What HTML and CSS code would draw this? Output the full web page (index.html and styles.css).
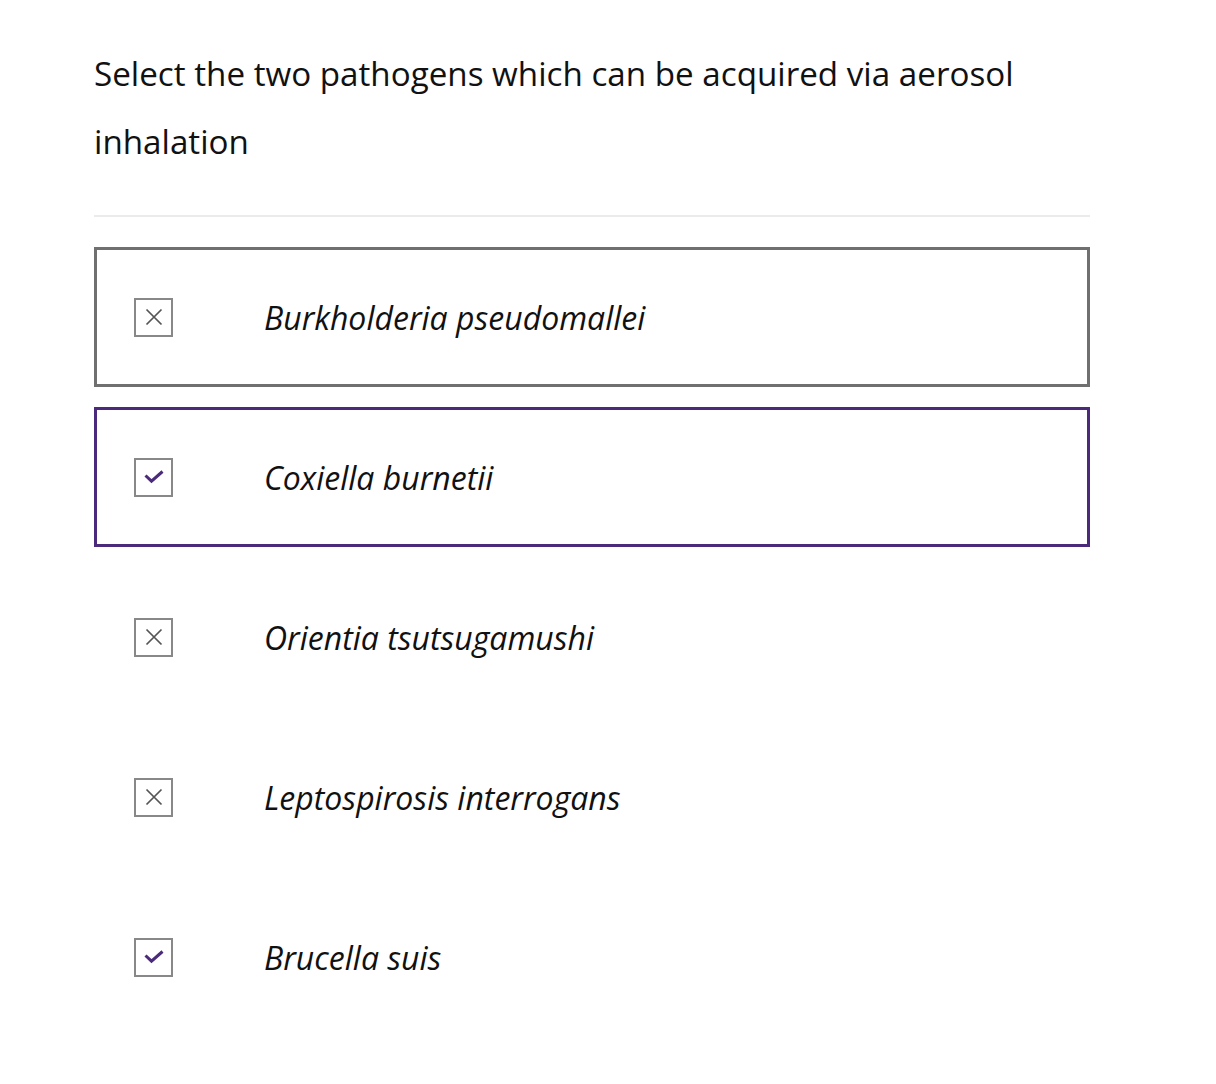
FILE: index.html
```html
<!DOCTYPE html>
<html>
<head>
<meta charset="utf-8">
<link rel="stylesheet" href="styles.css">
</head>
<body>
<div class="quiz">
  <h1 class="question">Select the two pathogens which can be acquired via aerosol inhalation</h1>
  <hr class="divider">
  <ul class="options">
    <li class="option option--wrong">
      <span class="box"><svg viewBox="0 0 18 18" width="18" height="18"><path d="M1.5 1.5 L16.5 16.5 M16.5 1.5 L1.5 16.5" stroke="#555" stroke-width="1.7" fill="none"/></svg></span>
      <span class="label">Burkholderia pseudomallei</span>
    </li>
    <li class="option option--right">
      <span class="box"><svg viewBox="0 0 20 14" width="20" height="14"><path d="M1.5 5.5 L7.5 11.2 L18.5 1.5" stroke="#4b2a7b" stroke-width="3" fill="none"/></svg></span>
      <span class="label">Coxiella burnetii</span>
    </li>
    <li class="option">
      <span class="box"><svg viewBox="0 0 18 18" width="18" height="18"><path d="M1.5 1.5 L16.5 16.5 M16.5 1.5 L1.5 16.5" stroke="#555" stroke-width="1.7" fill="none"/></svg></span>
      <span class="label">Orientia tsutsugamushi</span>
    </li>
    <li class="option">
      <span class="box"><svg viewBox="0 0 18 18" width="18" height="18"><path d="M1.5 1.5 L16.5 16.5 M16.5 1.5 L1.5 16.5" stroke="#555" stroke-width="1.7" fill="none"/></svg></span>
      <span class="label">Leptospirosis interrogans</span>
    </li>
    <li class="option">
      <span class="box"><svg viewBox="0 0 20 14" width="20" height="14"><path d="M1.5 5.5 L7.5 11.2 L18.5 1.5" stroke="#4b2a7b" stroke-width="3" fill="none"/></svg></span>
      <span class="label">Brucella suis</span>
    </li>
  </ul>
</div>
</body>
</html>
```

FILE: styles.css
```css
html, body {
  margin: 0;
  padding: 0;
  background: #fff;
}
body {
  font-family: "Open Sans", "Liberation Sans", sans-serif;
  color: #111;
}
.quiz {
  width: 996px;
  padding: 40px 0 0 94px;
}
.question {
  margin: 0;
  font-size: 33.2px;
  font-weight: 400;
  line-height: 68px;
  color: #111;
}
.divider {
  margin: 39px 0 30px 0;
  border: 0;
  height: 2px;
  background: #ebebeb;
}
.options {
  list-style: none;
  margin: 0;
  padding: 0;
  display: flex;
  flex-direction: column;
  gap: 20px;
}
.option {
  box-sizing: border-box;
  height: 140px;
  border: 3px solid transparent;
  display: flex;
  align-items: center;
  padding-left: 37px;
}
.option--wrong {
  border-color: #707070;
}
.option--right {
  border-color: #4b2a7b;
}
.box {
  box-sizing: border-box;
  width: 39px;
  height: 39px;
  border: 2px solid #888;
  display: flex;
  align-items: center;
  justify-content: center;
  flex: none;
}
.label {
  margin-left: 91px;
  font-style: italic;
  font-size: 32px;
  color: #111;
}
```
